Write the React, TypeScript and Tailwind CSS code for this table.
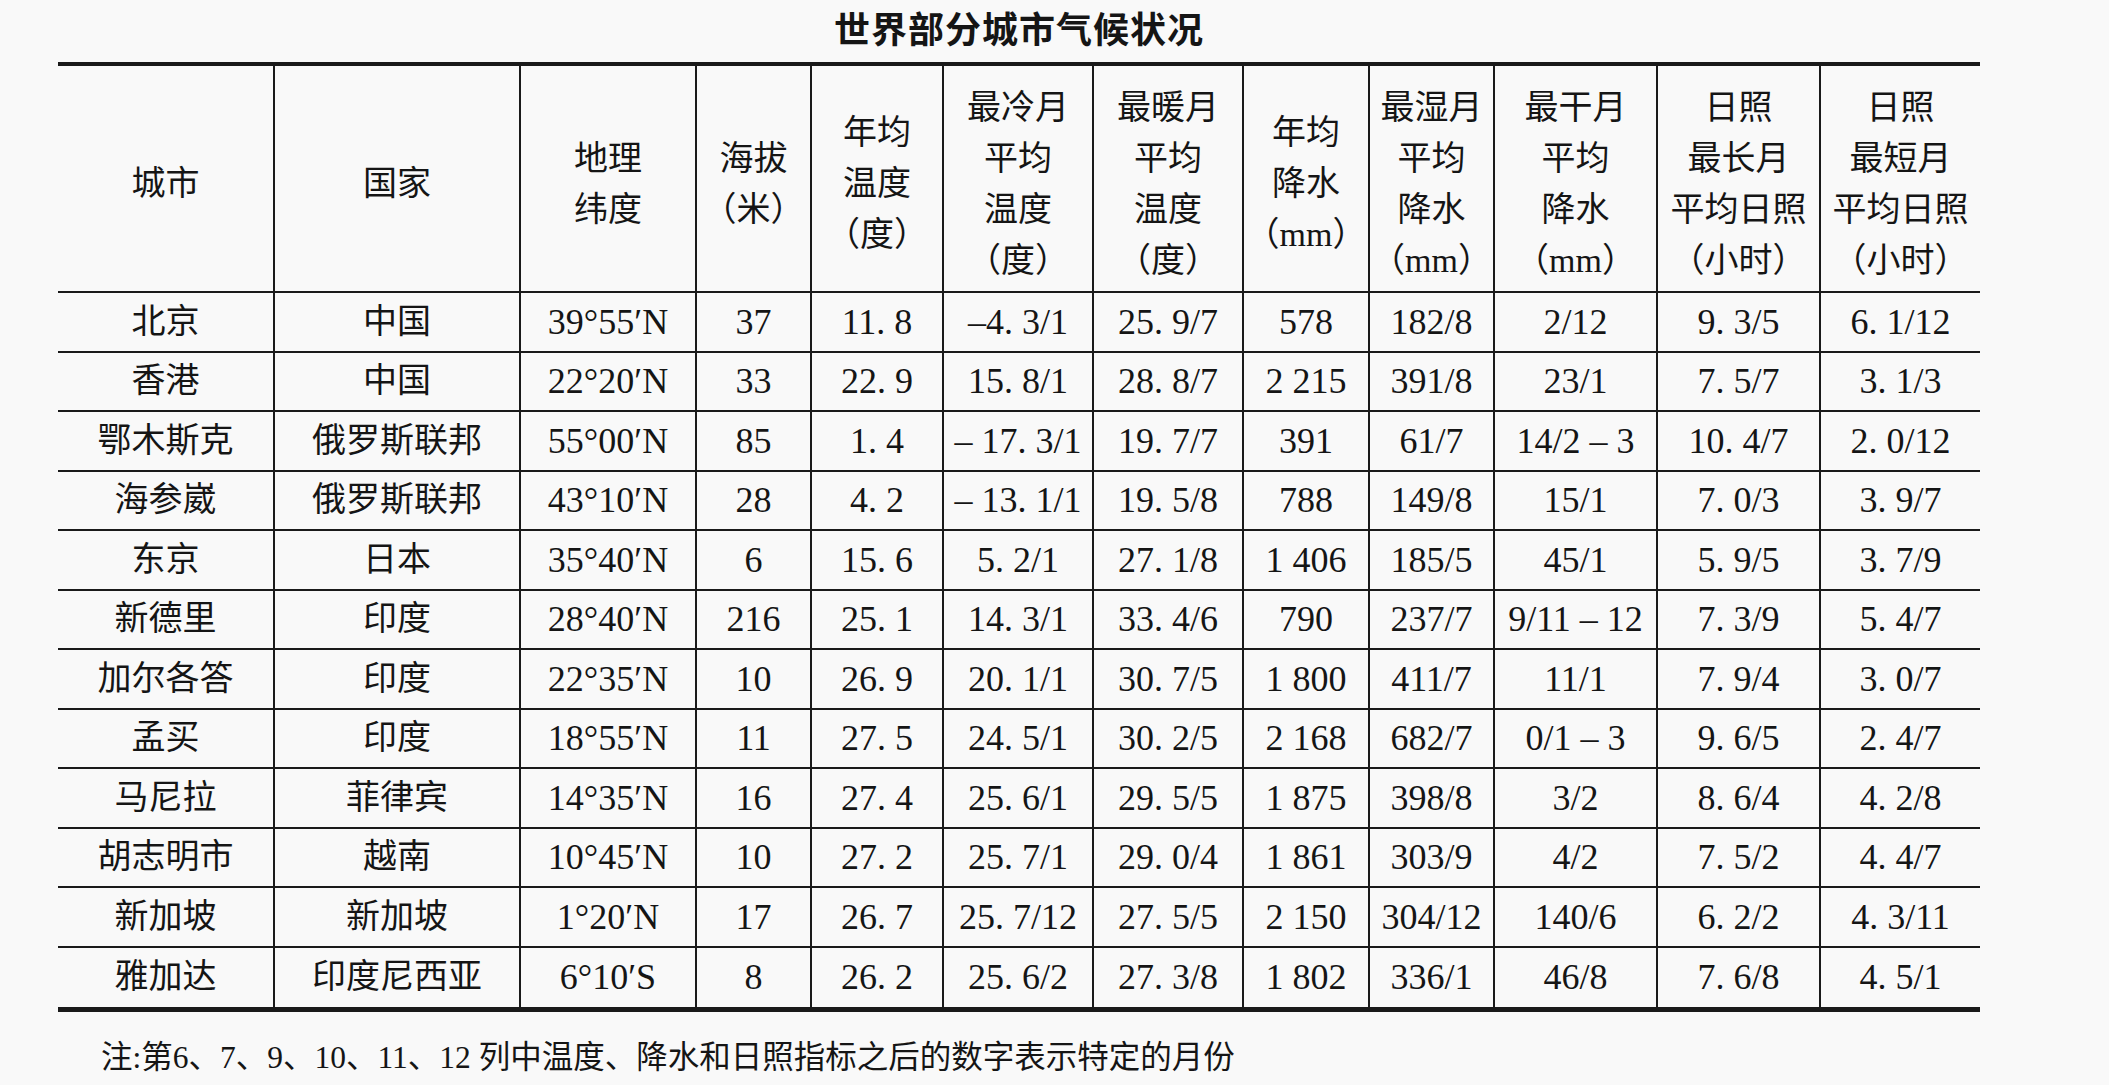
const headers: string[][] = [
  ['城市'],
  ['国家'],
  ['地理', '纬度'],
  ['海拔', '（米）'],
  ['年均', '温度', '（度）'],
  ['最冷月', '平均', '温度', '（度）'],
  ['最暖月', '平均', '温度', '（度）'],
  ['年均', '降水', '（mm）'],
  ['最湿月', '平均', '降水', '（mm）'],
  ['最干月', '平均', '降水', '（mm）'],
  ['日照', '最长月', '平均日照', '（小时）'],
  ['日照', '最短月', '平均日照', '（小时）'],
];

const rows: string[][] = [
  ['北京', '中国', '39°55′N', '37', '11. 8', '–4. 3/1', '25. 9/7', '578', '182/8', '2/12', '9. 3/5', '6. 1/12'],
  ['香港', '中国', '22°20′N', '33', '22. 9', '15. 8/1', '28. 8/7', '2 215', '391/8', '23/1', '7. 5/7', '3. 1/3'],
  ['鄂木斯克', '俄罗斯联邦', '55°00′N', '85', '1. 4', '– 17. 3/1', '19. 7/7', '391', '61/7', '14/2 – 3', '10. 4/7', '2. 0/12'],
  ['海参崴', '俄罗斯联邦', '43°10′N', '28', '4. 2', '– 13. 1/1', '19. 5/8', '788', '149/8', '15/1', '7. 0/3', '3. 9/7'],
  ['东京', '日本', '35°40′N', '6', '15. 6', '5. 2/1', '27. 1/8', '1 406', '185/5', '45/1', '5. 9/5', '3. 7/9'],
  ['新德里', '印度', '28°40′N', '216', '25. 1', '14. 3/1', '33. 4/6', '790', '237/7', '9/11 – 12', '7. 3/9', '5. 4/7'],
  ['加尔各答', '印度', '22°35′N', '10', '26. 9', '20. 1/1', '30. 7/5', '1 800', '411/7', '11/1', '7. 9/4', '3. 0/7'],
  ['孟买', '印度', '18°55′N', '11', '27. 5', '24. 5/1', '30. 2/5', '2 168', '682/7', '0/1 – 3', '9. 6/5', '2. 4/7'],
  ['马尼拉', '菲律宾', '14°35′N', '16', '27. 4', '25. 6/1', '29. 5/5', '1 875', '398/8', '3/2', '8. 6/4', '4. 2/8'],
  ['胡志明市', '越南', '10°45′N', '10', '27. 2', '25. 7/1', '29. 0/4', '1 861', '303/9', '4/2', '7. 5/2', '4. 4/7'],
  ['新加坡', '新加坡', '1°20′N', '17', '26. 7', '25. 7/12', '27. 5/5', '2 150', '304/12', '140/6', '6. 2/2', '4. 3/11'],
  ['雅加达', '印度尼西亚', '6°10′S', '8', '26. 2', '25. 6/2', '27. 3/8', '1 802', '336/1', '46/8', '7. 6/8', '4. 5/1'],
];

const grid =
  'grid grid-cols-[215px_246px_176px_115px_132px_150px_150px_126px_125px_163px_163px_161px]';

export default function App() {
  return (
    <div className="w-[2109px] h-[1085px] overflow-hidden bg-[#f9f9f9] text-[#151515] font-['Liberation_Serif','Noto_Sans_CJK_SC',serif]">
      {/* title */}
      <div className="ml-[58px] w-[1922px] h-[62px] flex items-center justify-center pb-[8px]">
        <h1 className="font-['Noto_Sans_CJK_SC',sans-serif] font-bold text-[36px] leading-none tracking-[1px]">
          世界部分城市气候状况
        </h1>
      </div>

      <div className="ml-[58px] w-[1922px] border-t-4 border-b-[5px] border-[#1a1a1a]">
        {/* header */}
        <div className={`${grid} h-[227px] border-b-2 border-[#1a1a1a]`}>
          {headers.map((lines, i) => (
            <div
              key={i}
              className={`flex flex-col items-center justify-center pt-[10px] text-[34px] leading-[51px] ${
                i > 0 ? 'border-l-2 border-[#1a1a1a]' : ''
              }`}
            >
              {lines.map((l, j) => (
                <span key={j} className="whitespace-nowrap">{l}</span>
              ))}
            </div>
          ))}
        </div>

        {/* data rows */}
        {rows.map((row, r) => (
          <div
            key={r}
            className={`${grid} h-[59.5px] ${r < rows.length - 1 ? 'border-b-2 border-[#1a1a1a]' : ''}`}
          >
            {row.map((cell, i) => (
              <div
                key={i}
                className={`flex items-center justify-center whitespace-nowrap leading-none ${
                  i < 2 ? 'text-[34px]' : 'text-[36px]'
                } ${i > 0 ? 'border-l-2 border-[#1a1a1a]' : ''}`}
              >
                {cell}
              </div>
            ))}
          </div>
        ))}
      </div>

      {/* footnote */}
      <p className="mt-[26px] pl-[101px] text-[31.5px] leading-[40px] whitespace-nowrap">
        注:第6、7、9、10、11、12 列中温度、降水和日照指标之后的数字表示特定的月份
      </p>
    </div>
  );
}
